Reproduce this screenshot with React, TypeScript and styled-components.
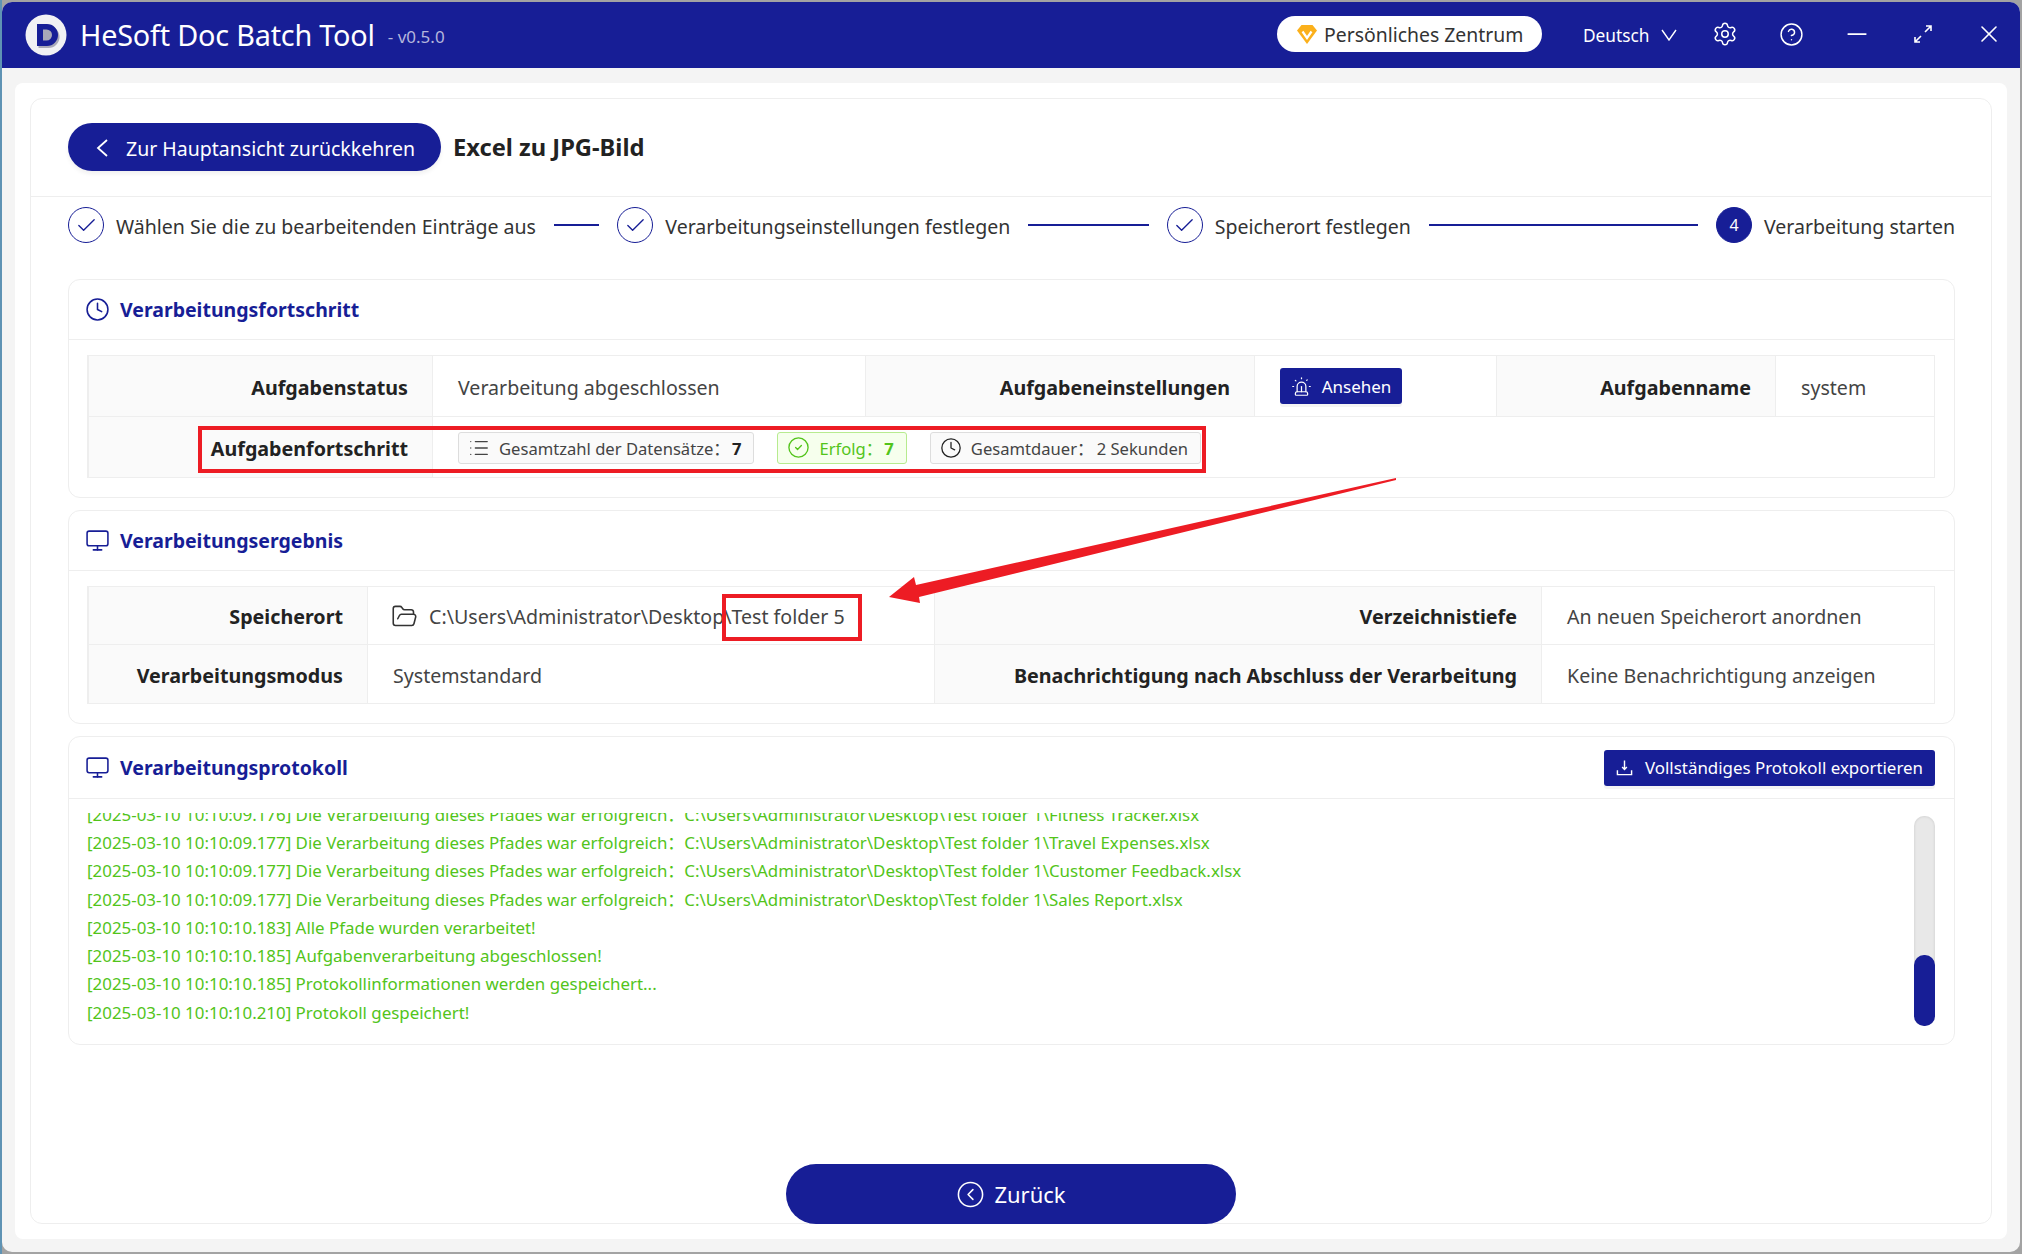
import React from "react";
import styled, { createGlobalStyle } from "styled-components";
import {
  Check,
  CircleCheck,
  CircleChevronLeft,
  CircleHelp,
  Clock,
  FolderOpen,
  List,
  Minus,
  Monitor,
  Settings,
  Siren,
  X,
} from "lucide-react";

const navy = "#171e96";
const font = `"Noto Sans", "Noto Sans CJK SC", sans-serif`;

const GlobalStyle = createGlobalStyle`
  html, body {
    margin: 0;
    height: 1254px;
    overflow: hidden;
    background: linear-gradient(90deg, #5f93b4 0, #5f93b4 2px, #a3a3a3 2px);
    font-family: ${font};
  }
  * { box-sizing: border-box; }
`;

const Page = styled.div`
  position: relative;
  width: 2022px;
  height: 1254px;
  padding: 2px;
`;

const Window = styled.div`
  width: 2018px;
  height: 1250px;
  border-radius: 10px;
  overflow: hidden;
  display: flex;
  flex-direction: column;
  background: #f4f4f4;
`;

const TitleBar = styled.header`
  height: 66px;
  flex: none;
  background: ${navy};
  display: flex;
  align-items: center;
  padding-left: 23px;
  color: #fff;
`;

const AppName = styled.div`
  margin: 0 0 2px 13px;
  font-size: 28.8px;
  letter-spacing: -0.2px;
`;

const Version = styled.div`
  margin-left: 13px;
  margin-top: 2px;
  font-size: 17px;
  color: #b4b6dc;
`;

const Spacer = styled.div`
  flex: 1;
`;

const VipPill = styled.div`
  width: 265px;
  height: 36px;
  border-radius: 18px;
  background: #fff;
  color: #333;
  font-size: 19.4px;
  display: flex;
  align-items: center;
  padding-left: 20px;
  gap: 7px;
  margin-bottom: 2px;
`;

const Language = styled.div`
  margin-left: 41px;
  width: 100px;
  display: flex;
  align-items: center;
  gap: 11px;
  font-size: 17.3px;
`;

const BarIcon = styled.div`
  width: 66px;
  height: 30px;
  display: flex;
  align-items: center;
  justify-content: center;
  margin-bottom: 2px;
`;

const BarIcons = styled.div`
  display: flex;
  margin-left: 9px;
  margin-right: -2px;
`;

const Content = styled.main`
  flex: 1;
  padding: 15px 13px 13px;
  min-height: 0;
  display: flex;
`;

const Sheet = styled.div`
  flex: 1;
  background: #fff;
  border-radius: 8px;
  padding: 15px;
  display: flex;
`;

const Inner = styled.div`
  flex: 1;
  border: 1px solid #eeeeee;
  border-radius: 12px;
  display: flex;
  flex-direction: column;
`;

const TopRow = styled.div`
  height: 98px;
  flex: none;
  border-bottom: 1px solid #eeeeee;
  padding: 24px 37px 0;
  display: flex;
  align-items: flex-start;
`;

const BackButton = styled.button`
  width: 373px;
  height: 48px;
  border: 0;
  border-radius: 24px;
  background: ${navy};
  box-shadow: 0 3px 4px rgba(0, 0, 0, 0.06);
  color: #fff;
  font: 19.5px ${font};
  display: flex;
  align-items: center;
  padding: 2px 0 0 28px;
  gap: 18px;
`;

const PageTitle = styled.h1`
  margin: 11px 0 0 12px;
  font-size: 23.7px;
  line-height: 26px;
  font-weight: 700;
  color: #222;
`;

const Steps = styled.div`
  height: 82px;
  flex: none;
  padding: 10px 36px 0 37px;
  display: flex;
`;

const Step = styled.div<{ $last?: boolean }>`
  flex: ${(p) => (p.$last ? "none" : "1")};
  height: 36px;
  display: flex;
  align-items: center;
`;

const StepCircle = styled.div<{ $active?: boolean }>`
  width: 36px;
  height: 36px;
  flex: none;
  border-radius: 50%;
  border: 1px solid ${navy};
  background: ${(p) => (p.$active ? navy : "#fff")};
  color: ${(p) => (p.$active ? "#fff" : navy)};
  display: flex;
  align-items: center;
  justify-content: center;
  font-size: 16px;
`;

const StepLabel = styled.div`
  margin-left: 12px;
  padding-top: 2px;
  font-size: 19.55px;
  color: #333;
  white-space: nowrap;
`;

const StepLine = styled.div`
  flex: 1;
  height: 2px;
  margin: 0 18px;
  background: ${navy};
`;

const Panels = styled.div`
  padding: 0 36px 0 37px;
  display: flex;
  flex-direction: column;
  gap: 12px;
`;

const Panel = styled.section`
  border: 1px solid #eeeeee;
  border-radius: 12px;
  background: #fff;
`;

const PanelHead = styled.div<{ $h?: number }>`
  height: ${(p) => p.$h ?? 60}px;
  border-bottom: 1px solid #eeeeee;
  display: flex;
  align-items: center;
  padding: 0 19px 0 16px;
  gap: 10px;
  color: ${navy};
`;

const PanelTitle = styled.div`
  flex: 1;
  font-size: 19.5px;
  font-weight: 700;
`;

const ExportButton = styled.button`
  width: 331px;
  height: 36px;
  border: 0;
  border-radius: 3px;
  background: ${navy};
  box-shadow: 0 3px 0 #f4f4f4;
  color: #fff;
  font: 16.9px ${font};
  display: flex;
  align-items: center;
  justify-content: center;
  gap: 12px;
`;

const Table = styled.div<{ $cols: string }>`
  margin: 15px 19px 19px 18px;
  border: 1px solid #eeeeee;
  display: grid;
  grid-template-columns: ${(p) => p.$cols};
`;

const LabelCell = styled.div<{ $h: number; $last?: boolean }>`
  height: ${(p) => p.$h}px;
  background: #fafafa;
  border-right: 1px solid #eeeeee;
  border-left: 1px solid #eeeeee;
  border-bottom: ${(p) => (p.$last ? "0" : "1px solid #eeeeee")};
  display: flex;
  align-items: center;
  justify-content: flex-end;
  padding: 2px 24px 0 0;
  font-size: 19.7px;
  font-weight: 700;
  color: #222;
  white-space: nowrap;
`;

const ValueCell = styled.div<{ $span?: number; $last?: boolean }>`
  grid-column: span ${(p) => p.$span ?? 1};
  border-bottom: ${(p) => (p.$last ? "0" : "1px solid #eeeeee")};
  display: flex;
  align-items: center;
  padding: 2px 0 0 25px;
  font-size: 19.6px;
  color: #444;
  white-space: nowrap;
`;

const SmallButton = styled.button`
  width: 122px;
  height: 36px;
  margin-top: -2px;
  border: 0;
  border-radius: 3px;
  background: ${navy};
  box-shadow: 0 3px 0 #f4f4f4;
  color: #fff;
  font: 17px ${font};
  display: flex;
  align-items: center;
  justify-content: center;
  gap: 10px;
`;

const Tags = styled.div`
  margin-top: -1px;
  display: flex;
  gap: 23px;
`;

const Tag = styled.div<{ $ok?: boolean }>`
  height: 32px;
  border-radius: 3px;
  border: 1px solid ${(p) => (p.$ok ? "#b7eb8f" : "#dddddd")};
  background: ${(p) => (p.$ok ? "#f6ffed" : "#fafafa")};
  color: ${(p) => (p.$ok ? "#52c41a" : "#444")};
  display: flex;
  align-items: center;
  padding: 0 12px 0 9px;
  gap: 9px;
  font-size: 16.6px;
`;

const Count = styled.b`
  margin-left: 2px;
  color: ${(p) => p.color ?? "#222"};
`;

const Duration = styled.span`
  margin-left: 3px;
`;

const PathIcon = styled.span`
  display: flex;
  margin: 0 11px 0 -2px;
  color: #333;
`;

const LogArea = styled.div`
  height: 245px;
  padding: 14px 19px 0 18px;
  display: flex;
  gap: 20px;
`;

const LogLines = styled.div`
  flex: 1;
  height: 214px;
  overflow: hidden;
  display: flex;
  flex-direction: column;
  justify-content: flex-end;
`;

const LogLine = styled.div`
  flex: none;
  height: 28.3px;
  line-height: 28.3px;
  font-size: 16.9px;
  color: #52c41a;
  white-space: nowrap;
`;

const ScrollTrack = styled.div`
  width: 21px;
  height: 210px;
  margin-top: 3px;
  flex: none;
  border-radius: 10px;
  background: #e8e8e8;
  box-shadow: inset 0 0 3px rgba(0, 0, 0, 0.14);
  display: flex;
  align-items: flex-end;
`;

const ScrollThumb = styled.div`
  width: 100%;
  height: 71px;
  border-radius: 10px;
  background: ${navy};
`;

const Footer = styled.div`
  margin-top: auto;
  margin-bottom: -1px;
  display: flex;
  justify-content: center;
`;

const BackBottom = styled.button`
  width: 450px;
  height: 60px;
  border: 0;
  border-radius: 30px;
  background: ${navy};
  color: #fff;
  font: 22px ${font};
  display: flex;
  align-items: center;
  justify-content: center;
  gap: 9px;
`;

const Mark = styled.div<{ $x: number; $y: number; $w: number; $h: number }>`
  position: absolute;
  left: ${(p) => p.$x}px;
  top: ${(p) => p.$y}px;
  width: ${(p) => p.$w}px;
  height: ${(p) => p.$h}px;
  border: 4px solid #ed1c24;
`;

const ArrowLayer = styled.svg`
  position: absolute;
  left: 0;
  top: 0;
  pointer-events: none;
`;

const Logo = () => (
  <svg width="42" height="42" viewBox="0 0 42 42">
    <circle cx="21" cy="21" r="20.5" fill="#f1f1f4" />
    <path d="M12 10h10a11 11 0 0 1 0 22H12z" fill="#a9a9b8" transform="translate(1.5 2)" />
    <path
      fillRule="evenodd"
      d="M12 10h10a11 11 0 0 1 0 22H12zM18 15.500v11h3.500a5.500 5.500 0 0 0 0-11z"
      fill={navy}
    />
  </svg>
);

const Gem = () => (
  <svg width="20" height="20" viewBox="0 0 20 20">
    <path d="M4.500 1h11L20 6.500 10 20 0 6.500z" fill="#fbb01b" />
    <path d="M5.500 7.500 10 14l4.500-6.500" fill="none" stroke="#fff" strokeWidth="2.200" />
  </svg>
);

const LangChevron = () => (
  <svg width="16" height="12" viewBox="0 0 16 12" fill="none" stroke="#fff" strokeWidth="1.400">
    <path d="M1 1l7 10 7-10" />
  </svg>
);

const BackChevron = () => (
  <svg width="12" height="18" viewBox="0 0 12 18" fill="none" stroke="#fff" strokeWidth="1.800">
    <path d="M11 1 2 9l9 8" />
  </svg>
);

const ExpandIcon = () => (
  <svg width="20" height="20" viewBox="0 0 20 20" fill="none" stroke="#fff" strokeWidth="1.600">
    <path d="M12 8l6-6M13 2h5v5M8 12l-6 6M7 18H2v-5" />
  </svg>
);

const TrayDown = () => (
  <svg width="17" height="17" viewBox="0 0 18 18" fill="none" stroke="#fff" strokeWidth="1.500">
    <path d="M9 1.500v9M6.500 8.500 9 11l2.500-2.500M1.500 12v4.500h15V12" />
  </svg>
);

const logLines = [
  "[2025-03-10 10:10:09.176] Die Verarbeitung dieses Pfades war erfolgreich：C:\\Users\\Administrator\\Desktop\\Test folder 1\\Fitness Tracker.xlsx",
  "[2025-03-10 10:10:09.177] Die Verarbeitung dieses Pfades war erfolgreich：C:\\Users\\Administrator\\Desktop\\Test folder 1\\Travel Expenses.xlsx",
  "[2025-03-10 10:10:09.177] Die Verarbeitung dieses Pfades war erfolgreich：C:\\Users\\Administrator\\Desktop\\Test folder 1\\Customer Feedback.xlsx",
  "[2025-03-10 10:10:09.177] Die Verarbeitung dieses Pfades war erfolgreich：C:\\Users\\Administrator\\Desktop\\Test folder 1\\Sales Report.xlsx",
  "[2025-03-10 10:10:10.183] Alle Pfade wurden verarbeitet!",
  "[2025-03-10 10:10:10.185] Aufgabenverarbeitung abgeschlossen!",
  "[2025-03-10 10:10:10.185] Protokollinformationen werden gespeichert...",
  "[2025-03-10 10:10:10.210] Protokoll gespeichert!",
];

const steps = [
  "Wählen Sie die zu bearbeitenden Einträge aus",
  "Verarbeitungseinstellungen festlegen",
  "Speicherort festlegen",
];

const App = () => (
  <Page>
    <GlobalStyle />
    <Window>
      <TitleBar>
        <Logo />
        <AppName>HeSoft Doc Batch Tool</AppName>
        <Version>- v0.5.0</Version>
        <Spacer />
        <VipPill>
          <Gem />
          Persönliches Zentrum
        </VipPill>
        <Language>
          Deutsch
          <LangChevron />
        </Language>
        <BarIcons>
          <BarIcon>
            <Settings size={26} strokeWidth={1.4} />
          </BarIcon>
          <BarIcon>
            <CircleHelp size={25} strokeWidth={1.4} />
          </BarIcon>
          <BarIcon>
            <Minus size={30} strokeWidth={1.4} />
          </BarIcon>
          <BarIcon>
            <ExpandIcon />
          </BarIcon>
          <BarIcon>
            <X size={28} strokeWidth={1.4} />
          </BarIcon>
        </BarIcons>
      </TitleBar>
      <Content>
        <Sheet>
          <Inner>
            <TopRow>
              <BackButton>
                <BackChevron />
                Zur Hauptansicht zurückkehren
              </BackButton>
              <PageTitle>Excel zu JPG-Bild</PageTitle>
            </TopRow>
            <Steps>
              {steps.map((label) => (
                <Step key={label}>
                  <StepCircle>
                    <Check size={23} strokeWidth={1.4} />
                  </StepCircle>
                  <StepLabel>{label}</StepLabel>
                  <StepLine />
                </Step>
              ))}
              <Step $last>
                <StepCircle $active>4</StepCircle>
                <StepLabel>Verarbeitung starten</StepLabel>
              </Step>
            </Steps>
            <Panels>
              <Panel>
                <PanelHead>
                  <Clock size={25} strokeWidth={1.5} />
                  <PanelTitle>Verarbeitungsfortschritt</PanelTitle>
                </PanelHead>
                <Table $cols="345px 432px 390px 241px 280px 1fr">
                  <LabelCell $h={61}>Aufgabenstatus</LabelCell>
                  <ValueCell>Verarbeitung abgeschlossen</ValueCell>
                  <LabelCell $h={61}>Aufgabeneinstellungen</LabelCell>
                  <ValueCell>
                    <SmallButton>
                      <Siren size={21} strokeWidth={1.4} />
                      Ansehen
                    </SmallButton>
                  </ValueCell>
                  <LabelCell $h={61}>Aufgabenname</LabelCell>
                  <ValueCell>system</ValueCell>
                  <LabelCell $h={60} $last>
                    Aufgabenfortschritt
                  </LabelCell>
                  <ValueCell $span={5} $last>
                    <Tags>
                      <Tag>
                        <List size={22} strokeWidth={1.4} />
                        <span>
                          Gesamtzahl der Datensätze：
                          <Count>7</Count>
                        </span>
                      </Tag>
                      <Tag $ok>
                        <CircleCheck size={23} strokeWidth={1.4} />
                        <span>
                          Erfolg：
                          <Count color="#52c41a">7</Count>
                        </span>
                      </Tag>
                      <Tag>
                        <Clock size={22} strokeWidth={1.4} color="#222" />
                        <span>
                          Gesamtdauer：
                          <Duration>2 Sekunden</Duration>
                        </span>
                      </Tag>
                    </Tags>
                  </ValueCell>
                </Table>
              </Panel>
              <Panel>
                <PanelHead>
                  <Monitor size={25} strokeWidth={1.5} />
                  <PanelTitle>Verarbeitungsergebnis</PanelTitle>
                </PanelHead>
                <Table $cols="280px 566px 608px 1fr">
                  <LabelCell $h={58}>Speicherort</LabelCell>
                  <ValueCell>
                    <PathIcon>
                      <FolderOpen size={27} strokeWidth={1.4} />
                    </PathIcon>
                    C:\Users\Administrator\Desktop\Test folder 5
                  </ValueCell>
                  <LabelCell $h={58}>Verzeichnistiefe</LabelCell>
                  <ValueCell>An neuen Speicherort anordnen</ValueCell>
                  <LabelCell $h={58} $last>
                    Verarbeitungsmodus
                  </LabelCell>
                  <ValueCell $last>Systemstandard</ValueCell>
                  <LabelCell $h={58} $last>
                    Benachrichtigung nach Abschluss der Verarbeitung
                  </LabelCell>
                  <ValueCell $last>Keine Benachrichtigung anzeigen</ValueCell>
                </Table>
              </Panel>
              <Panel>
                <PanelHead $h={62}>
                  <Monitor size={25} strokeWidth={1.5} />
                  <PanelTitle>Verarbeitungsprotokoll</PanelTitle>
                  <ExportButton>
                    <TrayDown />
                    Vollständiges Protokoll exportieren
                  </ExportButton>
                </PanelHead>
                <LogArea>
                  <LogLines>
                    {logLines.map((line, i) => (
                      <LogLine key={i}>{line}</LogLine>
                    ))}
                  </LogLines>
                  <ScrollTrack>
                    <ScrollThumb />
                  </ScrollTrack>
                </LogArea>
              </Panel>
            </Panels>
            <Footer>
              <BackBottom>
                <CircleChevronLeft size={29} strokeWidth={1.3} />
                Zurück
              </BackBottom>
            </Footer>
          </Inner>
        </Sheet>
      </Content>
    </Window>
    <Mark $x={198} $y={426} $w={1008} $h={47} />
    <Mark $x={722} $y={594} $w={140} $h={47} />
    <ArrowLayer width="2022" height="1254" viewBox="0 0 2022 1254">
      <polygon points="1396,478 1396,480 919,597 920,603 889,597 914,577 916,585" fill="#ed1c24" />
    </ArrowLayer>
  </Page>
);

export default App;
